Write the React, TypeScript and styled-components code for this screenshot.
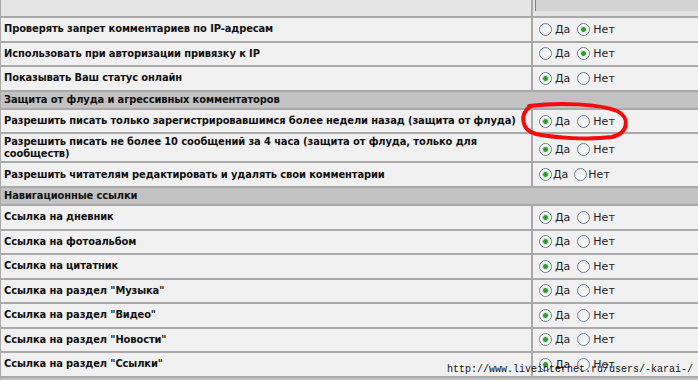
import styled, { createGlobalStyle } from 'styled-components';

const GlobalStyle = createGlobalStyle`
  html, body {
    margin: 0;
    padding: 0;
    background: #f0f0f0;
    overflow: hidden;
  }
  body {
    font-family: 'DejaVu Sans', Verdana, sans-serif;
    color: #111;
  }
`;

const Page = styled.div`
  position: relative;
  width: 698px;
  height: 380px;
  overflow: hidden;
`;

const Table = styled.div`
  display: grid;
  grid-template-columns: 530px 1fr;
  gap: 2px;
  padding-left: 1px;
  background: #a9a9a9;
`;

const TopCell = styled.div<{ right?: boolean }>`
  height: 16px;
  background: #e4e4e4;
  padding-left: ${({ right }) => (right ? '2px' : '0')};
`;

const TopField = styled.div`
  height: 11px;
  background: #d3d3d3;
  border-left: 1px solid #7d7d7d;
`;

const Section = styled.div`
  grid-column: 1 / -1;
  height: 16.3px;
  display: flex;
  align-items: center;
  padding-left: 3px;
  background: #c2c2c2;
  font-size: 11px;
  font-weight: bold;
  font-stretch: condensed;
  letter-spacing: -0.1px;
`;

const Label = styled.div<{ tall?: boolean }>`
  min-height: ${({ tall }) => (tall ? '27px' : '22.5px')};
  display: flex;
  align-items: center;
  padding-left: 3px;
  background: #f0f0f0;
  font-size: 11px;
  line-height: 12px;
  font-weight: bold;
  font-stretch: condensed;
  letter-spacing: -0.1px;
`;

const Options = styled.div<{ tall?: boolean }>`
  display: flex;
  align-items: center;
  padding: ${({ tall }) => (tall ? '4px 0 0 6px' : '0 0 0 6px')};
  background: #f0f0f0;
  font-size: 11px;
`;

const Choice = styled.label<{ tight?: boolean }>`
  display: flex;
  align-items: center;
  gap: ${({ tight }) => (tight ? '1px' : '3px')};
  margin-right: ${({ tight }) => (tight ? '6px' : '7px')};
  color: #222;
`;

const Radio = styled.span<{ checked?: boolean }>`
  width: 11px;
  height: 11px;
  border-radius: 50%;
  border: 1px solid #6f7f8e;
  background: ${({ checked }) =>
    checked
      ? 'radial-gradient(circle, #2f9a2f 0 2px, #b8dcb8 2.6px, #ffffff 4px)'
      : 'linear-gradient(135deg, #e6e9ec, #ffffff)'};
`;

const Watermark = styled.div`
  position: absolute;
  left: 447px;
  top: 364px;
  font-family: 'Liberation Mono', 'DejaVu Sans Mono', monospace;
  font-size: 10px;
  color: #111;
  white-space: nowrap;
`;

const Scribble = styled.svg`
  position: absolute;
  left: 0;
  top: 0;
  pointer-events: none;
`;

type Row = { text: React.ReactNode; yes: boolean; tall?: boolean; tight?: boolean };
type Block = { title?: string; rows: Row[] };

const blocks: Block[] = [
  {
    rows: [
      { text: 'Проверять запрет комментариев по IP-адресам', yes: false },
      { text: 'Использовать при авторизации привязку к IP', yes: false },
      { text: 'Показывать Ваш статус онлайн', yes: true },
    ],
  },
  {
    title: 'Защита от флуда и агрессивных комментаторов',
    rows: [
      { text: 'Разрешить писать только зарегистрировавшимся более недели назад (защита от флуда)', yes: true },
      {
        text: (
          <span>
            Разрешить писать не более 10 сообщений за 4 часа (защита от флуда, только для
            <br />
            сообществ)
          </span>
        ),
        yes: true,
        tall: true,
      },
      { text: 'Разрешить читателям редактировать и удалять свои комментарии', yes: true, tight: true },
    ],
  },
  {
    title: 'Навигационные ссылки',
    rows: [
      { text: 'Ссылка на дневник', yes: true },
      { text: 'Ссылка на фотоальбом', yes: true },
      { text: 'Ссылка на цитатник', yes: true },
      { text: 'Ссылка на раздел "Музыка"', yes: true },
      { text: 'Ссылка на раздел "Видео"', yes: true },
      { text: 'Ссылка на раздел "Новости"', yes: true },
      { text: 'Ссылка на раздел "Ссылки"', yes: true },
    ],
  },
  { title: '', rows: [] },
];

export default function App() {
  return (
    <Page>
      <GlobalStyle />
      <Table>
        <TopCell />
        <TopCell right>
          <TopField />
        </TopCell>
        {blocks.map((block, bi) => (
          <>
            {block.title !== undefined && <Section key={`s${bi}`}>{block.title}</Section>}
            {block.rows.map((row, ri) => (
              <>
                <Label key={`l${bi}-${ri}`} tall={row.tall}>
                  {row.text}
                </Label>
                <Options key={`o${bi}-${ri}`} tall={row.tall}>
                  <Choice tight={row.tight}>
                    <Radio checked={row.yes} />
                    Да
                  </Choice>
                  <Choice tight={row.tight}>
                    <Radio checked={!row.yes} />
                    Нет
                  </Choice>
                </Options>
              </>
            ))}
          </>
        ))}
      </Table>

      {/* красная пометка от руки вокруг переключателя */}
      <Scribble width="698" height="380" viewBox="0 0 698 380">
        <path
          d="M529 106 C560 102 600 104 617 111 C630 117 629 133 612 137 C588 140 556 138 536 134 C521 130 519 114 531 106"
          fill="none"
          stroke="#f20c0c"
          strokeWidth="4"
          strokeLinecap="round"
        />
      </Scribble>

      <Watermark>http://www.liveinternet.ru/users/-karai-/</Watermark>
    </Page>
  );
}
